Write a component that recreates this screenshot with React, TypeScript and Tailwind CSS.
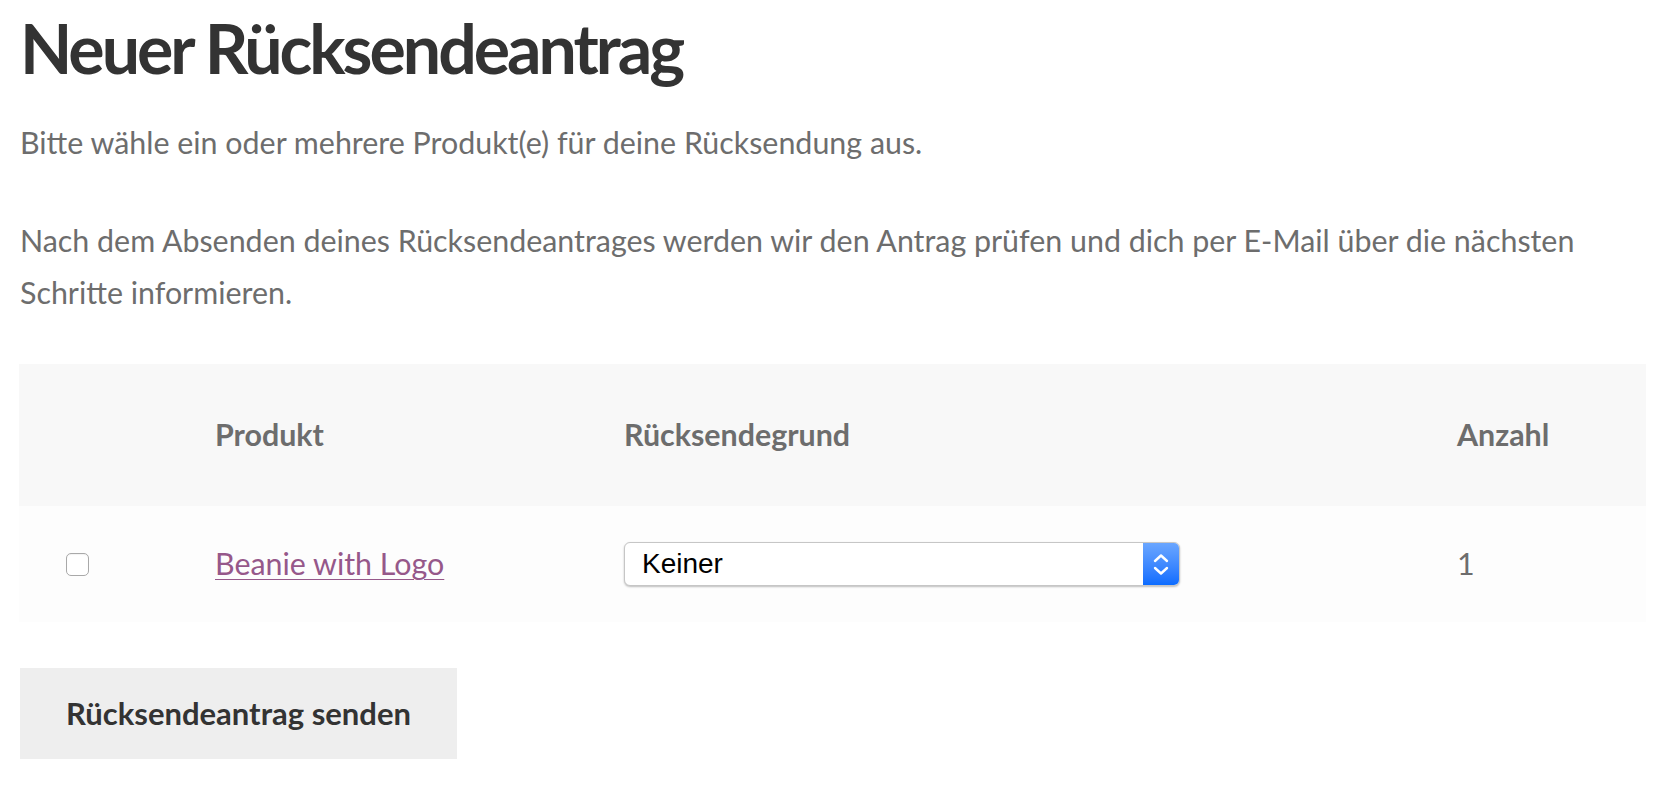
export default function App() {
  return (
    <div className="min-h-screen bg-white font-['Lato',sans-serif]">
      <div className="pl-[20px] pr-[33px]">
        <h1 className="pt-[8px] text-[68px] font-bold leading-[80px] tracking-[-3px] text-[#333333]">
          Neuer Rücksendeantrag
        </h1>
        <p className="mt-[28px] text-[30.4px] leading-[52px] text-[#6d6d6d]">
          Bitte wähle ein oder mehrere Produkt(e) für deine Rücksendung aus.
        </p>
        <p className="mt-[46px] text-[30.4px] leading-[52px] text-[#6d6d6d]">
          Nach dem Absenden deines Rücksendeantrages werden wir den Antrag prüfen und dich per E-Mail über die nächsten
          <br />
          Schritte informieren.
        </p>

        <div className="mt-[46px] ml-[-1px]">
          <div className="grid h-[142px] grid-cols-[196px_409px_833px_1fr] items-center bg-[#f8f8f8] text-[30.4px] font-bold text-[#6d6d6d]">
            <div />
            <div>Produkt</div>
            <div>Rücksendegrund</div>
            <div>Anzahl</div>
          </div>
          <div className="grid h-[116px] grid-cols-[196px_409px_833px_1fr] items-center bg-[#fdfdfd] text-[30.4px] text-[#6d6d6d]">
            <div className="pl-[47px]">
              <div className="h-[23px] w-[23px] rounded-[5px] border border-[#a9a9a9] bg-white shadow-[inset_0_1px_1px_rgba(0,0,0,0.05)]" />
            </div>
            <div>
              <a href="#" className="text-[#96588a] underline decoration-1 underline-offset-[4px]">
                Beanie with Logo
              </a>
            </div>
            <div>
              <div className="flex h-[44px] w-[556px] items-stretch rounded-[6px] border border-[#c6c6c6] bg-white shadow-[0_1px_2px_rgba(0,0,0,0.25)]">
                <div className="flex flex-1 items-center pl-[17px] font-['Liberation_Sans',sans-serif] text-[28px] text-black">
                  Keiner
                </div>
                <div className="flex w-[36px] flex-col items-center justify-center gap-[3px] rounded-r-[5px] bg-gradient-to-b from-[#6aa6ff] to-[#0a6cff]">
                  <svg width="16" height="10" viewBox="0 0 16 10" fill="none">
                    <path d="M2 8 L8 2.5 L14 8" stroke="white" strokeWidth="2.4" strokeLinecap="round" strokeLinejoin="round" />
                  </svg>
                  <svg width="16" height="10" viewBox="0 0 16 10" fill="none">
                    <path d="M2 2 L8 7.5 L14 2" stroke="white" strokeWidth="2.4" strokeLinecap="round" strokeLinejoin="round" />
                  </svg>
                </div>
              </div>
            </div>
            <div>1</div>
          </div>
        </div>

        <button className="mt-[46px] flex h-[91px] w-[437px] items-center pl-[46px] bg-[#eeeeee] text-[31px] font-bold text-[#333333]">
          Rücksendeantrag senden
        </button>
      </div>
    </div>
  )
}
